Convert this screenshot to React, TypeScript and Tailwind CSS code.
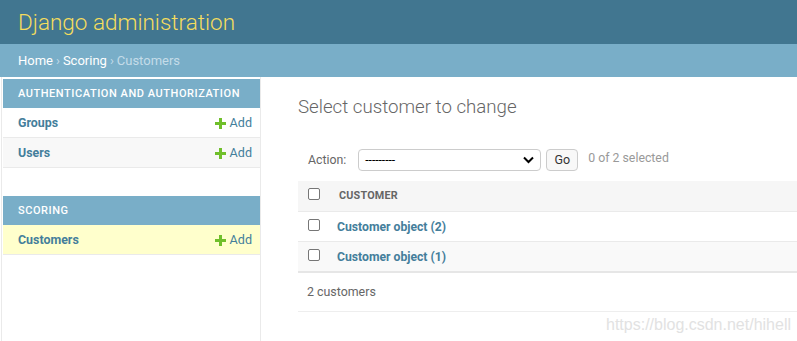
import React from "react";

const Plus = () => (
  <svg width="11" height="11" viewBox="0 0 11 11" className="mr-[4px] inline-block">
    <path d="M4 0h3v4h4v3H7v4H4V7H0V4h4z" fill="#70bf2b" />
  </svg>
);

const Checkbox = () => (
  <span className="inline-block w-[12px] h-[12px] border border-[#767676] rounded-[2px] bg-white" />
);

function SideRow({ name, bg }: { name: string; bg: string }) {
  return (
    <div className={`flex items-center justify-between h-[30px] pt-[2px] pl-[15px] pr-[8px] border-b border-[#eaeaea] ${bg}`}>
      <span className="text-[12.4px] font-bold text-[#447e9b]">{name}</span>
      <span className="flex items-center text-[12.6px] text-[#447e9b]">
        <Plus />
        Add
      </span>
    </div>
  );
}

function Caption({ text }: { text: string }) {
  return (
    <div className="h-[29px] flex items-center pt-[1px] pl-[15px] bg-[#79aec8] text-white text-[11px] font-medium tracking-[0.55px] uppercase">
      {text}
    </div>
  );
}

export default function App() {
  return (
    <div className="w-[797px] h-[341px] overflow-hidden bg-white font-['Roboto',sans-serif] relative">
      <div className="h-[44px] bg-[#417690] flex items-center pl-[18px]">
        <span className="text-[22.5px] font-light text-[#f5dd5d] leading-none">Django administration</span>
      </div>
      <div className="h-[33px] bg-[#79aec8] flex items-center pl-[18px] text-[13px] text-[#c4dce8]">
        <span className="text-white">Home</span>
        <span className="mx-[3px]">›</span>
        <span className="text-white">Scoring</span>
        <span className="mx-[3px]">›</span>
        <span>Customers</span>
      </div>
      <div className="flex">
        <div className="w-[260px] h-[264px] ml-[1px] border-l border-r border-[#eaeaea] pl-[1px] pt-[2px] shrink-0">
          <Caption text="Authentication and Authorization" />
          <SideRow name="Groups" bg="bg-white" />
          <SideRow name="Users" bg="bg-[#f8f8f8]" />
          <div className="h-[28px]" />
          <Caption text="Scoring" />
          <SideRow name="Customers" bg="bg-[#ffffcc]" />
        </div>
        <div className="flex-1 pl-[37px] pt-[18px]">
          <h1 className="text-[18.7px] font-light text-[#666] leading-[24px]">Select customer to change</h1>
          <div className="mt-[24px] flex items-center h-[34px] pl-[10px] text-[12.3px] text-[#666]">
            <span>Action:</span>
            <div className="ml-[12px] w-[183px] h-[22px] border border-[#ccc] rounded-[4px] flex items-center justify-between pl-[6px] pr-[6px]">
              <span className="text-[12px] text-black">---------</span>
              <svg width="11" height="8" viewBox="0 0 11 8">
                <path d="M1 1.5l4.5 4.5L10 1.5" stroke="#000" strokeWidth="2" fill="none" />
              </svg>
            </div>
            <div className="ml-[5px] w-[32px] h-[22px] border border-[#ccc] rounded-[4px] bg-[#f8f8f8] flex items-center justify-center text-[12.5px] text-[#333]">Go</div>
            <span className="ml-[10px] text-[#999] -mt-[3px]">0 of 2 selected</span>
          </div>
          <div className="mt-[4px]">
            <div className="h-[31px] bg-[#f6f6f6] border-b border-[#eaeaea] flex items-center pl-[10px]">
              <span className="-mt-[4px] flex"><Checkbox /></span>
              <span className="ml-[19px] text-[10.8px] font-bold text-[#666] uppercase tracking-[0.2px]">Customer</span>
            </div>
            <div className="h-[30px] bg-white border-b border-[#eaeaea] flex items-center pl-[10px]">
              <span className="-mt-[3px] flex"><Checkbox /></span>
              <span className="ml-[17px] pt-[1px] text-[12.2px] font-bold text-[#447e9b]">Customer object (2)</span>
            </div>
            <div className="h-[31px] bg-[#f9f9f9] border-b-2 border-[#e6e6e6] flex items-center pl-[10px]">
              <span className="-mt-[3px] flex"><Checkbox /></span>
              <span className="ml-[17px] pt-[1px] text-[12.2px] font-bold text-[#447e9b]">Customer object (1)</span>
            </div>
            <div className="h-[39px] border-b border-[#eeeeee] flex items-center pl-[9px] text-[12.4px] text-[#666]">
              2 customers
            </div>
          </div>
        </div>
      </div>
      <div className="absolute left-[606px] top-[313px] text-[16px] text-[#e2e2e2] font-['Liberation_Sans',sans-serif]">
        https://blog.csdn.net/hihell
      </div>
    </div>
  );
}
